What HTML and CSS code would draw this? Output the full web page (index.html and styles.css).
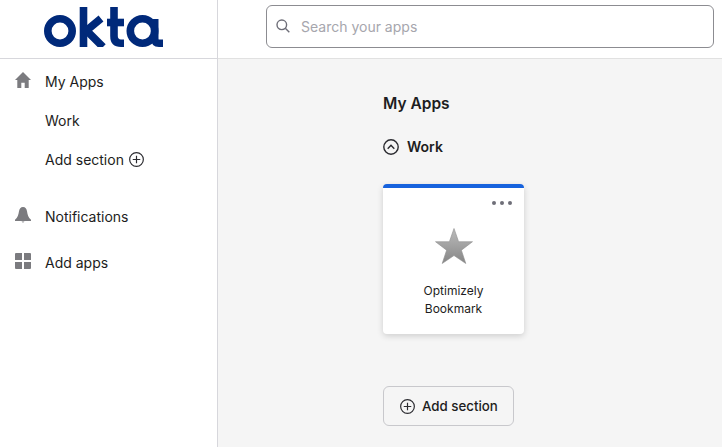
FILE: index.html
```html
<!DOCTYPE html>
<html lang="en">
<head>
<meta charset="utf-8">
<title>My Apps</title>
<link rel="stylesheet" href="styles.css">
</head>
<body>
<div class="page">
  <aside class="sidebar">
    <div class="logo-box">
      <svg class="logo" width="119" height="40" viewBox="0 0 119 40" aria-label="okta">
        <g fill="none" stroke="#00297a" stroke-width="7.600">
          <circle cx="16" cy="24" r="12.200"/>
          <path d="M39.500 0V40"/>
          <path d="M39.500 26L57 11.500M43 24L59 40"/>
          <path d="M70 0V29Q70 36.200 77 36.200H80"/>
          <path d="M63 15.500H80"/>
          <circle cx="98.500" cy="24" r="12.200"/>
          <path d="M110.700 12V31Q110.700 36.200 115 36.200H119"/>
        </g>
      </svg>
    </div>
    <nav class="nav">
      <a class="nav-item">
        <svg class="nav-icon" viewBox="0 0 16 16"><path d="M8 0L0 8H2.300V16H6.300V10.800H9.700V16H13.700V8H16Z"/></svg>
        <span>My Apps</span>
      </a>
      <a class="nav-item">
        <span class="nav-icon"></span>
        <span>Work</span>
      </a>
      <a class="nav-item">
        <span class="nav-icon"></span>
        <span>Add section</span>
        <svg class="plus" viewBox="0 0 14 14"><circle cx="7" cy="7" r="6.400"/><path d="M7 3.500V10.500M3.500 7H10.500"/></svg>
      </a>
      <a class="nav-item nav-gap">
        <svg class="nav-icon" viewBox="0 0 16 16"><path d="M8 0C5.500 0 4.500 1.800 4 4.200C3.400 8 2.800 10.500 0 12.800V14H16V12.800C13.200 10.500 12.600 8 12 4.200C11.500 1.800 10.500 0 8 0ZM6.500 14.500Q8 16.500 9.500 14.500Z"/></svg>
        <span>Notifications</span>
      </a>
      <a class="nav-item nav-apps">
        <svg class="nav-icon" viewBox="0 0 16 16"><path d="M0 1a1 1 0 0 1 1-1H7V7H0ZM9 0H15a1 1 0 0 1 1 1V7H9ZM0 9H7V16H1a1 1 0 0 1-1-1ZM9 9H16V15a1 1 0 0 1-1 1H9Z"/></svg>
        <span>Add apps</span>
      </a>
    </nav>
  </aside>
  <div class="right">
    <header class="topbar">
      <div class="search">
        <svg class="search-icon" viewBox="0 0 14 14"><circle cx="5.800" cy="5.800" r="4.800"/><path d="M9.300 9.300L13.300 13.300"/></svg>
        <span class="placeholder">Search your apps</span>
      </div>
    </header>
    <main class="main">
      <div class="content">
        <h1 class="title">My Apps</h1>
        <div class="section-head">
          <svg class="chevron" viewBox="0 0 16 16"><circle cx="8" cy="8" r="7.200"/><path d="M4.700 9.700L8 6.200L11.300 9.700"/></svg>
          <h2 class="section-title">Work</h2>
        </div>
        <article class="card">
          <div class="dots"><i></i><i></i><i></i></div>
          <svg class="star" viewBox="0 0 38 36">
            <defs>
              <linearGradient id="starfill" x1="0" y1="0" x2="0" y2="1">
                <stop offset="0" stop-color="#bcbcbc"/>
                <stop offset="1" stop-color="#868686"/>
              </linearGradient>
            </defs>
            <path d="M19 .500L23.600 13.700H37.500L26.400 22.200L30.800 35.500L19 27.500L7.200 35.500L11.600 22.200L.500 13.700H14.400Z" fill="url(#starfill)" stroke="#8f8f8f" stroke-width=".6"/>
          </svg>
          <p class="card-name">Optimizely<br>Bookmark</p>
        </article>
        <button class="add-btn" type="button">
          <svg class="plus" viewBox="0 0 14 14"><circle cx="7" cy="7" r="6.400"/><path d="M7 3.500V10.500M3.500 7H10.500"/></svg>
          <span>Add section</span>
        </button>
      </div>
    </main>
  </div>
</div>
</body>
</html>
```

FILE: styles.css
```css
* { box-sizing: border-box; }
html, body { margin: 0; height: 100%; overflow: hidden; }
body { font-family: Inter, "Liberation Sans", sans-serif; color: #1d1d21; background: #fff; }
.page { display: flex; height: 447px; width: 722px; }

.sidebar { width: 218px; flex: none; border-right: 1px solid #d7d7dc; background: #fff; }
.logo-box { height: 59px; border-bottom: 1px solid #d7d7dc; padding: 7px 0 0 44px; }
.logo { display: block; }
.nav { display: flex; flex-direction: column; padding: 3px 0 0 15px; }
.nav-item { display: flex; align-items: center; height: 39px; font-size: 14px; line-height: 20px; color: #1d1d21; }
.nav-icon { width: 16px; height: 16px; margin: 0 14px 4px 0; fill: #7b7b7f; flex: none; }
.nav-gap { margin-top: 18px; }
.nav-apps { margin-top: 7px; }
.plus { width: 15px; height: 15px; margin-left: 5px; fill: none; stroke: #2b2b30; stroke-width: 1.100; flex: none; }

.right { flex: 1; display: flex; flex-direction: column; min-width: 0; }
.topbar { height: 59px; flex: none; background: #fff; border-bottom: 1px solid #e1e1e1; padding: 5px 8px 0 48px; }
.search { display: flex; align-items: center; height: 43px; border: 1px solid #8c8c91; border-radius: 6px; padding-left: 9px; }
.search-icon { width: 14px; height: 14px; fill: none; stroke: #6e6e78; stroke-width: 1.400; margin: 0 11px 2px 0; flex: none; }
.placeholder { font-size: 14px; color: #a6a6ad; }

.main { flex: 1; background: #f5f5f5; padding: 0 0 0 165px; overflow: hidden; }
.content { display: flex; flex-direction: column; align-items: flex-start; }
.title { margin: 34px 0 0; font-size: 15.500px; line-height: 22px; font-weight: 600; color: #1d1d21; }
.section-head { display: flex; align-items: center; margin-top: 21px; height: 22px; }
.chevron { width: 16px; height: 16px; fill: none; stroke: #2b2b30; stroke-width: 1.400; margin-right: 8px; flex: none; }
.section-title { margin: 0; font-size: 14px; line-height: 20px; font-weight: 600; color: #1d1d21; }

.card { position: relative; width: 141px; height: 150px; margin-top: 26px; background: #fff; border-top: 4px solid #1662dd; border-radius: 4px; box-shadow: 0 2px 6px rgba(0,0,0,.16); display: flex; flex-direction: column; align-items: center; }
.dots { position: absolute; top: 13px; right: 12px; display: flex; gap: 4px; }
.dots i { display: block; width: 4px; height: 4px; border-radius: 50%; background: #6e6e78; }
.star { width: 38px; height: 36px; margin-top: 40px; }
.card-name { margin: 18px 0 0; font-size: 12px; line-height: 18px; text-align: center; color: #1d1d21; }

.add-btn { display: flex; align-items: center; margin-top: 52px; width: 131px; height: 40px; padding: 0 0 0 16px; background: #f5f5f5; border: 1px solid #c8c8cc; border-radius: 6px; font-family: inherit; font-size: 13.300px; font-weight: 500; color: #1d1d21; }
.add-btn .plus { margin: 0 7px 0 0; }
```
